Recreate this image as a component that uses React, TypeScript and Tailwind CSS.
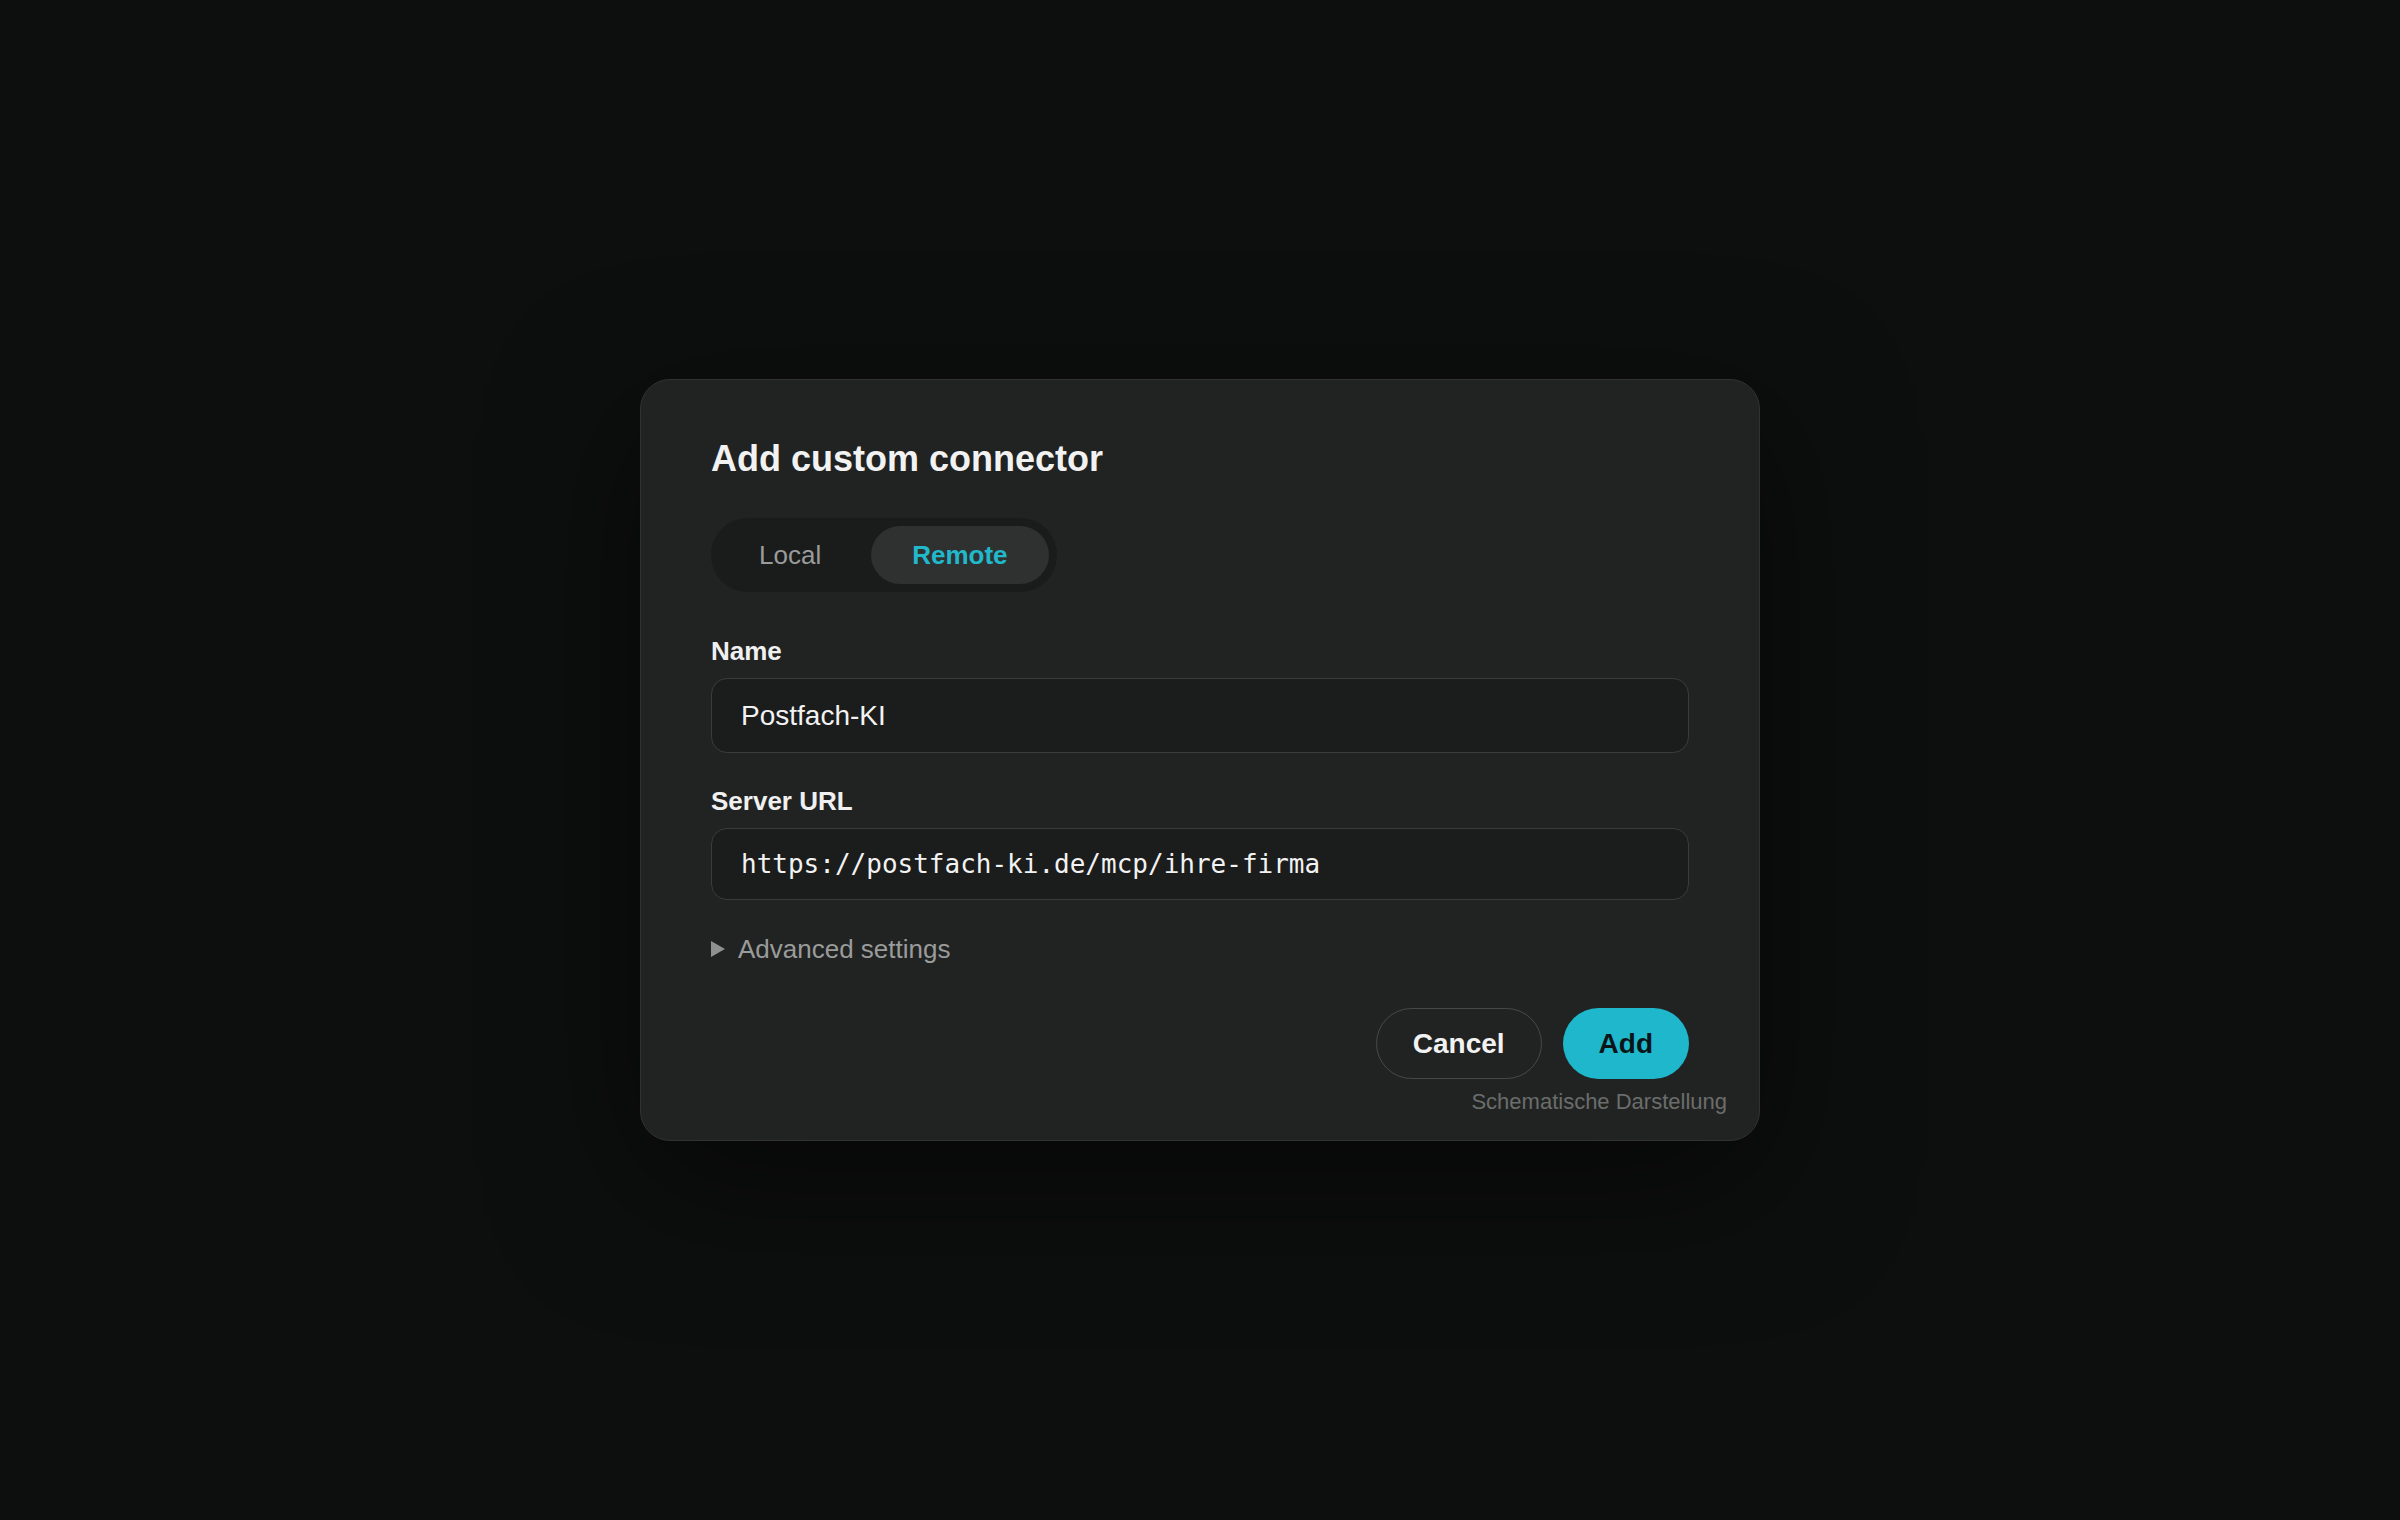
import { useState } from 'react';

export default function App() {
  const [mode, setMode] = useState<'local' | 'remote'>('remote');
  const [name, setName] = useState('Postfach-KI');
  const [url, setUrl] = useState('https://postfach-ki.de/mcp/ihre-firma');

  return (
    <div className="min-h-screen w-full flex items-center justify-center bg-[#0d0f0e] font-['Liberation_Sans',Arial,sans-serif]">
      <div className="relative w-[1120px] flex flex-col rounded-[30px] border border-[#313332] bg-[#212322] pt-[57px] px-[70px] pb-[61px] shadow-[0_40px_140px_rgba(0,0,0,0.55)]">
        <h2 className="text-[36px] leading-[44px] font-bold text-[#f2f2f2]">Add custom connector</h2>

        {/* mode toggle */}
        <div className="mt-[37px] self-start flex items-center gap-[10px] rounded-full bg-[#1a1b1b] p-2">
          <button
            onClick={() => setMode('local')}
            className={
              mode === 'local'
                ? 'h-[58px] px-[41px] rounded-full bg-[#2f3131] text-[26px] leading-[30px] font-bold text-[#22b8cc]'
                : 'h-[58px] px-10 rounded-full text-[26px] leading-[30px] text-[#9a9b9b]'
            }
          >
            Local
          </button>
          <button
            onClick={() => setMode('remote')}
            className={
              mode === 'remote'
                ? 'h-[58px] px-[41px] rounded-full bg-[#2f3131] text-[26px] leading-[30px] font-bold text-[#22b8cc]'
                : 'h-[58px] px-10 rounded-full text-[26px] leading-[30px] text-[#9a9b9b]'
            }
          >
            Remote
          </button>
        </div>

        <label className="mt-[44px] text-[26px] leading-[30px] font-bold text-[#f0f0f0]">Name</label>
        <input
          value={name}
          onChange={e => setName(e.target.value)}
          className="mt-3 h-[75px] w-full rounded-[16px] border border-[#3a3c3b] bg-[#1b1c1c] px-[29px] text-[28px] text-[#f2f2f2] outline-none"
        />

        <label className="mt-[33px] text-[26px] leading-[30px] font-bold text-[#f0f0f0]">Server URL</label>
        <input
          value={url}
          onChange={e => setUrl(e.target.value)}
          className="mt-3 h-[72px] w-full rounded-[16px] border border-[#3a3c3b] bg-[#1b1c1c] px-[29px] font-['DejaVu_Sans_Mono',monospace] text-[26px] text-[#f2f2f2] outline-none"
        />

        <div className="mt-[34px] flex items-center gap-[13px] text-[26px] leading-[30px] text-[#9a9b9b]">
          <svg width="14" height="16" viewBox="0 0 14 16" className="shrink-0">
            <path d="M0 0 L14 8 L0 16 Z" fill="#8f9190" />
          </svg>
          <span>Advanced settings</span>
        </div>

        <div className="mt-[44px] flex justify-end gap-[21px]">
          <button className="h-[71px] px-9 rounded-full border-[1.5px] border-[#474948] text-[28px] font-bold text-[#f2f2f2]">
            Cancel
          </button>
          <button className="h-[71px] px-9 rounded-full bg-[#1fb7cc] text-[28px] font-bold text-[#0b1518]">
            Add
          </button>
        </div>

        <span className="absolute right-[32px] bottom-[25px] text-[22px] leading-[26px] text-[#6b6d6c]">
          Schematische Darstellung
        </span>
      </div>
    </div>
  );
}
